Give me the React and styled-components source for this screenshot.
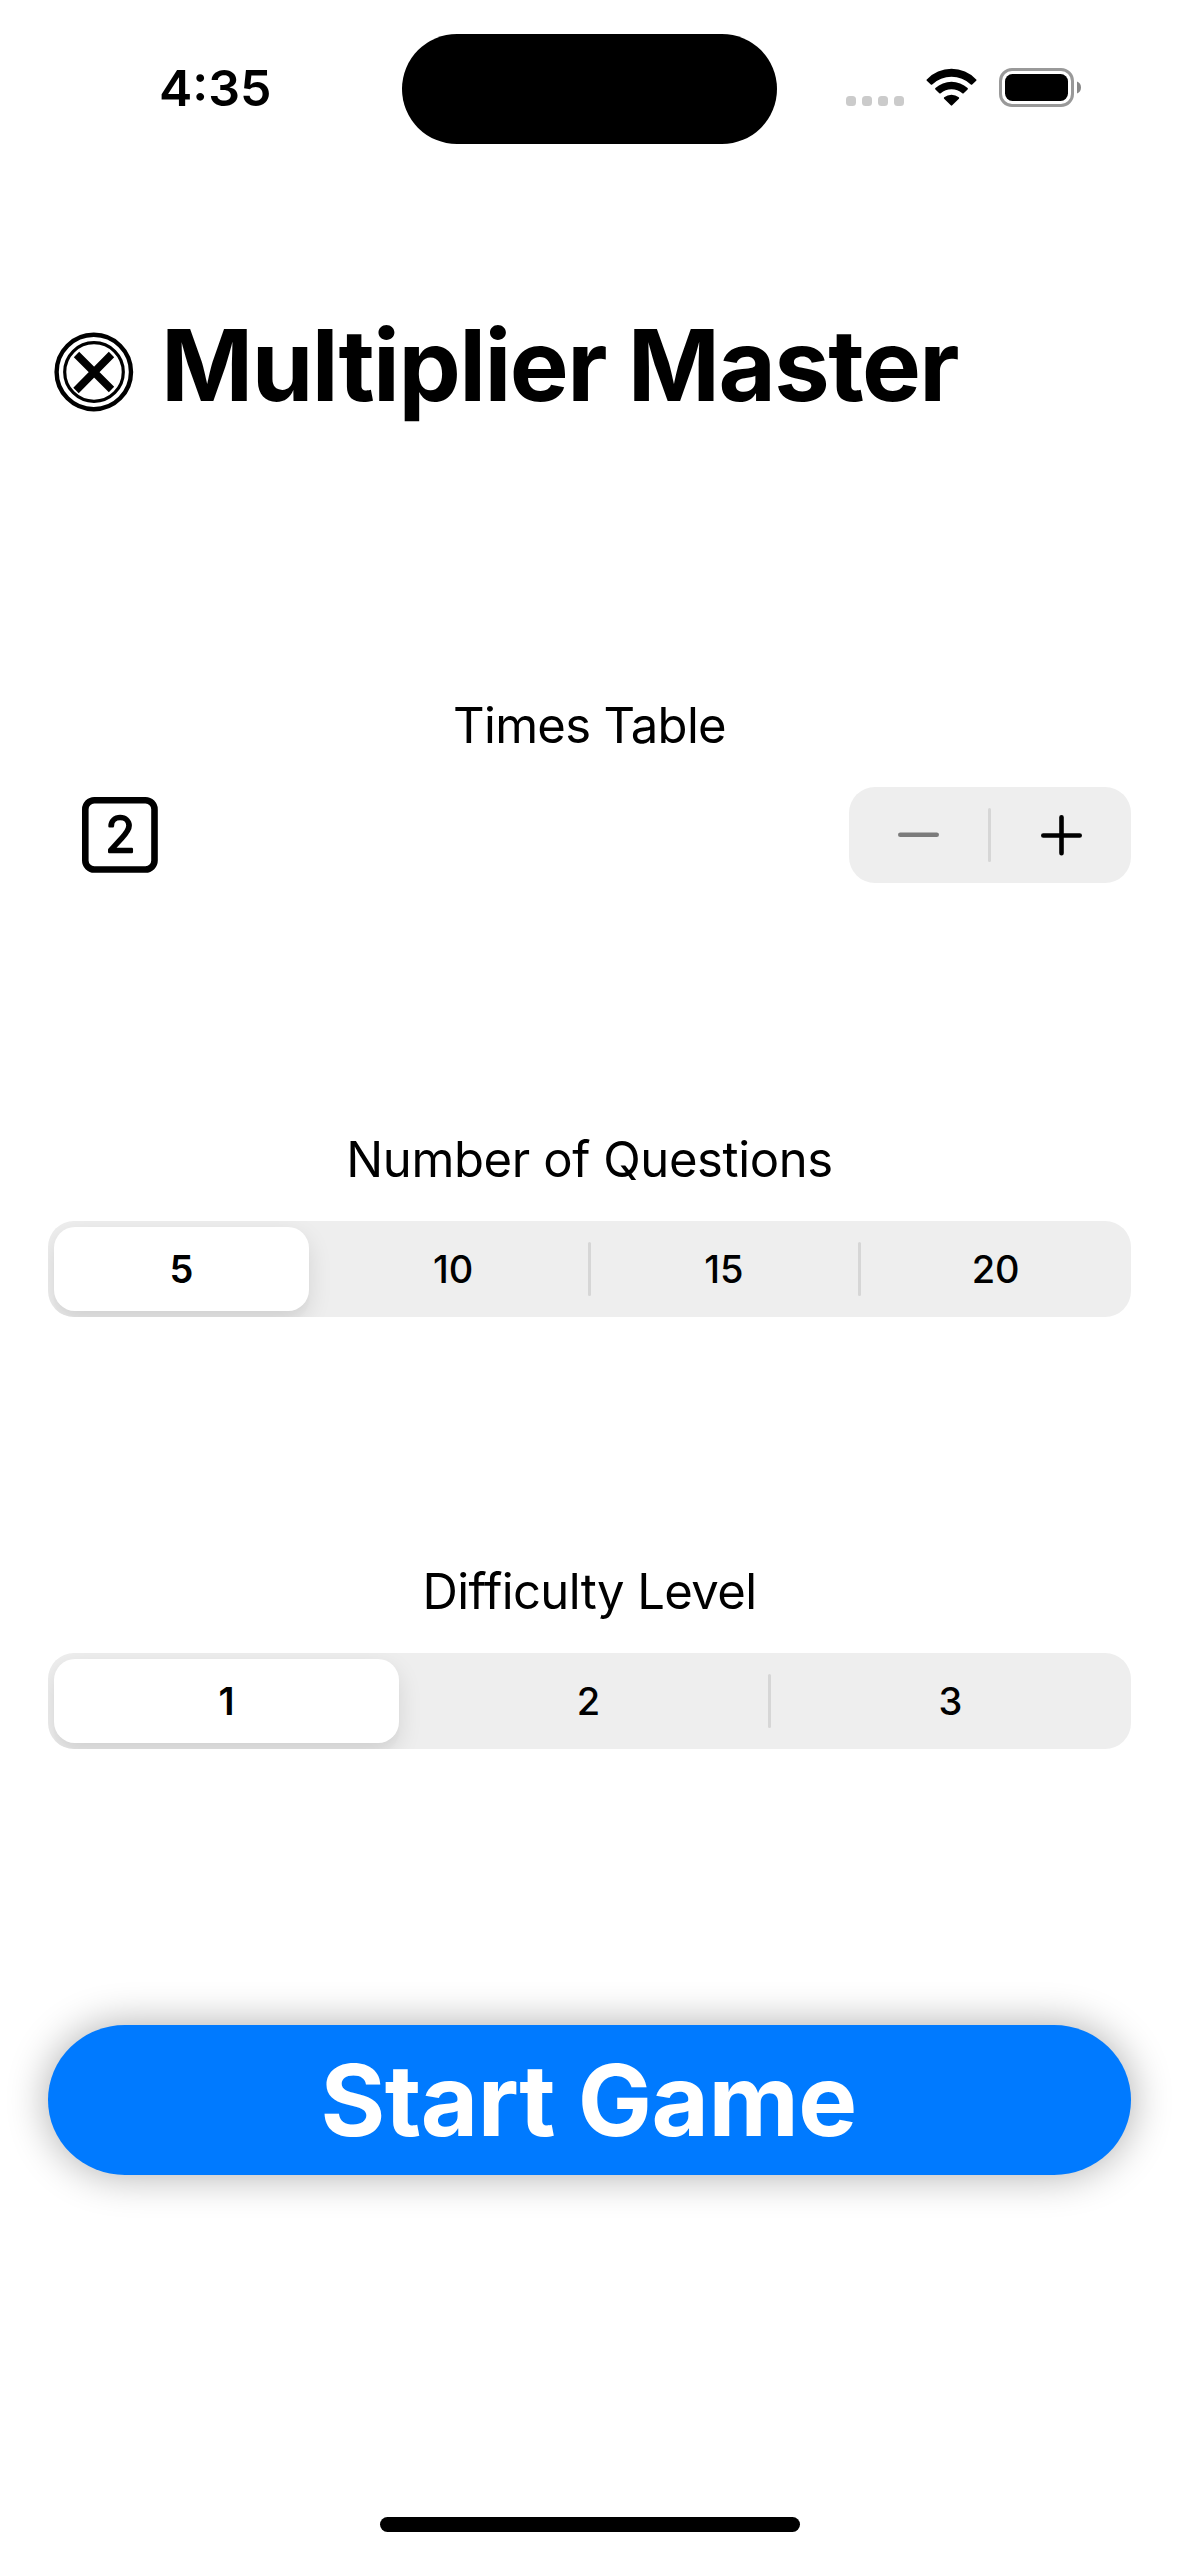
import React, { useState } from "react";
import styled, { createGlobalStyle } from "styled-components";

const GlobalStyle = createGlobalStyle`
  * { box-sizing: border-box; }
  body {
    margin: 0;
    background: #fff;
    color: #000;
    font-family: Inter, "Liberation Sans", sans-serif;
  }
  button { font: inherit; color: inherit; border: 0; padding: 0; background: none; }
`;

const Screen = styled.main`
  width: 1179px;
  height: 2556px;
  display: flex;
  flex-direction: column;
  background: #fff;
  overflow: hidden;
`;

const StatusBar = styled.header`
  height: 177px;
  flex: none;
  display: grid;
  grid-template-columns: 402px 375px 402px;
  align-items: center;
`;

const Clock = styled.time`
  padding-left: 159px;
  margin-bottom: 2px;
  font-size: 50px;
  font-weight: 600;
  line-height: 60px;
`;

const Island = styled.div`
  height: 110px;
  margin-top: 1px;
  border-radius: 55px;
  background: #000;
`;

const StatusIcons = styled.div`
  height: 39px;
  display: flex;
  align-items: flex-end;
  justify-content: flex-end;
  gap: 22px;
  padding-right: 98px;
  margin-bottom: 2px;

  svg { display: block; flex: none; }
`;

const Dots = styled.div`
  display: flex;
  gap: 6px;
  margin-bottom: 1px;
`;

const Dot = styled.span`
  width: 10px;
  height: 10px;
  border-radius: 3.5px;
  background: #cbcbcb;
`;

const WifiIcon = styled.svg`
  margin-bottom: 1px;
`;

const Content = styled.div`
  flex: 1;
  display: flex;
  flex-direction: column;
  padding: 128px 48px 0;
`;

const TitleRow = styled.div`
  height: 120px;
  display: flex;
  align-items: center;
  gap: 27px;
  padding-left: 6px;
  margin-bottom: 271px;

  svg { display: block; flex: none; margin-top: 14px; }
`;

const Title = styled.h1`
  margin: 0;
  font-size: 99px;
  font-weight: 700;
  line-height: 120px;
  letter-spacing: -1.57px;
  white-space: nowrap;
`;

const Section = styled.section`
  display: flex;
  flex-direction: column;
  gap: 31px;
  margin-bottom: ${(p) => p.$after}px;
`;

const Label = styled.h2`
  margin: 0;
  text-align: center;
  font-size: 49px;
  font-weight: 400;
  line-height: 60px;
  letter-spacing: ${(p) => p.$tracking}px;
`;

const StepperRow = styled.div`
  height: 96px;
  display: flex;
  align-items: center;
  justify-content: space-between;
  padding-left: 34px;

  svg { display: block; }
`;

const Stepper = styled.div`
  width: 282px;
  height: 96px;
  display: grid;
  grid-template-columns: 139px 3px 140px;
  align-items: center;
  border-radius: 26px;
  background: #eeeeee;
`;

const StepButton = styled.button`
  height: 96px;
  display: flex;
  align-items: center;
  justify-content: center;
`;

const Divider = styled.span`
  width: 3px;
  height: 54px;
  border-radius: 1.5px;
  background: #d6d6d6;
`;

const Segments = styled.div`
  height: 96px;
  display: grid;
  grid-template-columns: repeat(${(p) => p.$count}, 1fr);
  border-radius: 26px;
  background: #eeeeee;
  overflow: hidden;
`;

const Segment = styled.div`
  display: flex;
  align-items: center;
  padding: ${(p) => (p.$on ? `6px ${p.$inset}px 6px 6px` : "0")};
  margin-right: ${(p) => (p.$divided ? "-1px" : "0")};
`;

const SegmentButton = styled.button`
  flex: 1;
  height: ${(p) => (p.$on ? 84 : 96)}px;
  border-radius: 21px;
  font-size: 38px;
  font-weight: ${(p) => (p.$on ? 600 : 500)};
  line-height: 84px;
  background: ${(p) => (p.$on ? "#fff" : "transparent")};
  box-shadow: ${(p) =>
    p.$on ? "0 9px 24px rgba(0,0,0,.11), 0 9px 3px rgba(0,0,0,.02)" : "none"};
`;

const StartButton = styled.button`
  height: 150px;
  flex: none;
  border-radius: 77px / 75px;
  background: #007aff;
  color: #fff;
  font-size: 99px;
  font-weight: 700;
  line-height: 150px;
  letter-spacing: -0.6px;
  text-indent: -2px;
  box-shadow: 0 0 42px rgba(0, 0, 0, 0.33);
`;

const HomeIndicator = styled.div`
  flex: none;
  align-self: center;
  width: 420px;
  height: 15px;
  margin-bottom: 24px;
  border-radius: 8px;
  background: #000;
`;

function Wifi() {
  return (
    <WifiIcon width="51" height="38" viewBox="0 0 51 38">
      <path d="M0.8 11.4A34 34 0 0 1 50.2 11.4Q50.9 12.1 50.2 12.8L46.2 16.4Q45.5 17 44.8 16.4A28.4 28.4 0 0 0 6.2 16.4Q5.5 17 4.8 16.4L0.8 12.8Q0.1 12.1 0.8 11.4Z" />
      <path d="M9.4 20.1A23.6 23.6 0 0 1 41.6 20.1Q42.3 20.8 41.6 21.5L37.7 25.2Q37 25.9 36.3 25.3A16.8 16.8 0 0 0 14.7 25.3Q14 25.9 13.3 25.2L9.4 21.5Q8.7 20.8 9.4 20.1Z" />
      <path d="M18.2 29.3A11.5 11.5 0 0 1 32.8 29.3Q33.6 30 32.9 30.7L26.2 37.3Q25.5 38 24.8 37.3L18.1 30.7Q17.4 30 18.2 29.3Z" />
    </WifiIcon>
  );
}

function Battery() {
  return (
    <svg width="82" height="39" viewBox="0 0 82 39">
      <rect x="1.5" y="1.5" width="72" height="36" rx="11.5" fill="none" stroke="#999" strokeWidth="3" />
      <rect x="6" y="6" width="63" height="27" rx="7.5" />
      <path d="M78 13.5A6.5 6.5 0 0 1 78 25.5Z" fill="#888" />
    </svg>
  );
}

function TimesBadge() {
  return (
    <svg width="80" height="80" viewBox="0 0 80 80" fill="none" stroke="#000">
      <circle cx="39.8" cy="40" r="37.2" strokeWidth="4.4" />
      <circle cx="40" cy="40" r="29.3" strokeWidth="3.2" />
      <path d="M22.5 22.5L57.5 57.5M57.5 22.5L22 58.5" strokeWidth="7.6" />
    </svg>
  );
}

function NumberSquare({ value }) {
  return (
    <svg width="76" height="76" viewBox="0 0 76 76">
      <rect x="3.3" y="3.3" width="69.2" height="69.2" rx="9" fill="none" stroke="#000" strokeWidth="6.6" />
      <text
        x="38.4"
        y="55"
        textAnchor="middle"
        fontFamily="Inter, sans-serif"
        fontSize="49.5"
        fontWeight="300"
        stroke="#000"
        strokeWidth="2.5"
        strokeLinejoin="round"
      >
        {value}
      </text>
    </svg>
  );
}

function Picker({ options, inset }) {
  const [selected, setSelected] = useState(0);
  return (
    <Segments $count={options.length}>
      {options.map((option, i) => {
        const on = i === selected;
        const divided = !on && i + 1 !== selected && i < options.length - 1;
        return (
          <Segment key={option} $on={on} $inset={inset} $divided={divided}>
            <SegmentButton $on={on} onClick={() => setSelected(i)}>
              {option}
            </SegmentButton>
            {divided && <Divider />}
          </Segment>
        );
      })}
    </Segments>
  );
}

export default function App() {
  const [table, setTable] = useState(2);
  return (
    <Screen>
      <GlobalStyle />
      <StatusBar>
        <Clock>4:35</Clock>
        <Island />
        <StatusIcons>
          <Dots>
            <Dot />
            <Dot />
            <Dot />
            <Dot />
          </Dots>
          <Wifi />
          <Battery />
        </StatusIcons>
      </StatusBar>

      <Content>
        <TitleRow>
          <TimesBadge />
          <Title>Multiplier Master</Title>
        </TitleRow>

        <Section $after={247}>
          <Label $tracking={-0.71}>Times Table</Label>
          <StepperRow>
            <NumberSquare value={table} />
            <Stepper>
              <StepButton
                aria-label="Decrement"
                onClick={() => setTable(Math.max(2, table - 1))}
              >
                <svg width="42" height="42" viewBox="0 0 42 42" stroke={table > 2 ? "#000" : "#7b7b7b"} strokeWidth="4.6" strokeLinecap="round">
                  <path d="M2.3 20.7H38.7" />
                </svg>
              </StepButton>
              <Divider />
              <StepButton
                aria-label="Increment"
                onClick={() => setTable(Math.min(12, table + 1))}
              >
                <svg width="42" height="42" viewBox="0 0 42 42" stroke="#000" strokeWidth="4.6" strokeLinecap="round">
                  <path d="M3.3 21.5H39.7M21.5 3.3V39.3" />
                </svg>
              </StepButton>
            </Stepper>
          </StepperRow>
        </Section>

        <Section $after={245}>
          <Label $tracking={-0.39}>Number of Questions</Label>
          <Picker options={[5, 10, 15, 20]} inset={9.75} />
        </Section>

        <Section $after={276}>
          <Label $tracking={-0.61}>Difficulty Level</Label>
          <Picker options={[1, 2, 3]} inset={10} />
        </Section>

        <StartButton>Start Game</StartButton>
      </Content>

      <HomeIndicator />
    </Screen>
  );
}
